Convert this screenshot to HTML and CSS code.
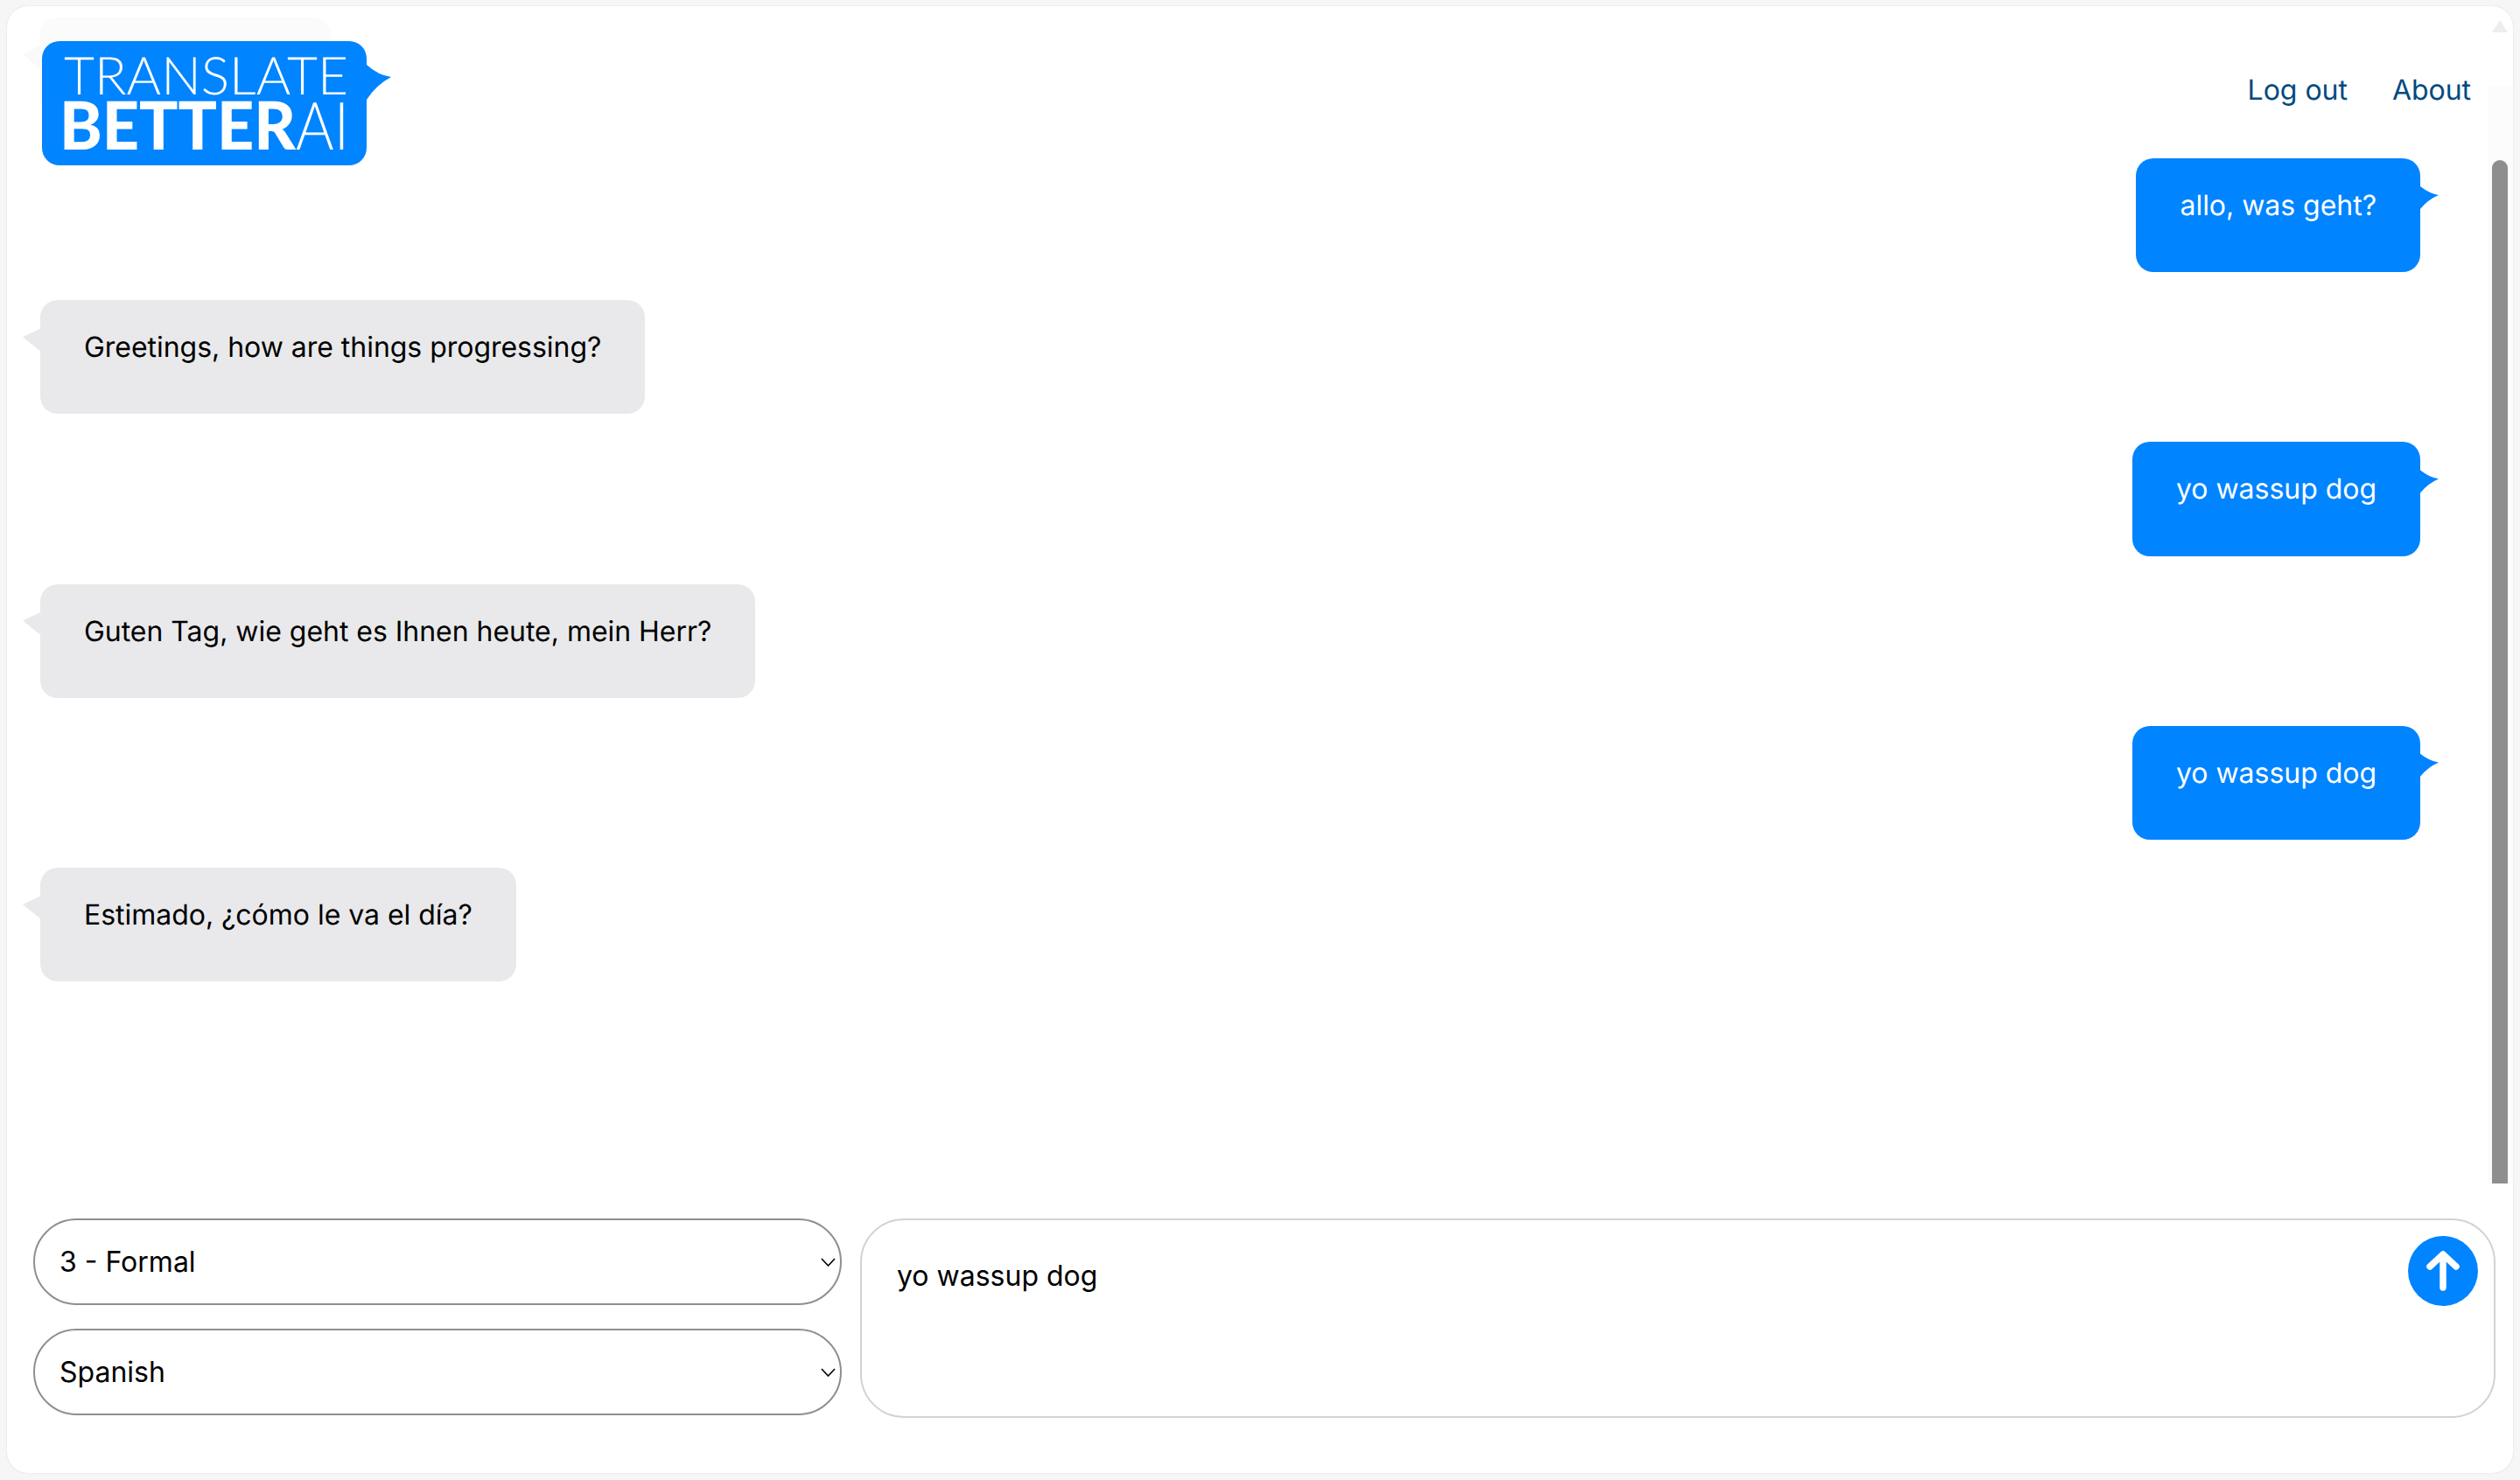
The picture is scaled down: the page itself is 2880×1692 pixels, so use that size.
FILE: index.html
```html
<!DOCTYPE html>
<html lang="en">

<head>
    <meta charset="UTF-8">
    <title>Translate Better AI</title>
    <link rel="stylesheet" href="styles.css">
</head>

<body>
    <div class="card">
        <div class="ghost"></div>
        <div class="scroll-up"></div>
        <div class="scroll-track"></div>
        <div class="scroll-thumb"></div>

        <header class="top">
            <svg class="logo" width="399" height="142" viewBox="0 0 399 142">
                <path d="M20 0H351A20 20 0 0 1 371 20V27Q384 39 399 41Q382 50 371 67V122A20 20 0 0 1 351 142H20A20 20 0 0 1 0 122V20A20 20 0 0 1 20 0Z" fill="#0084ff" />
                <text class="logo-thin" x="25" y="61" textLength="325" lengthAdjust="spacingAndGlyphs">TRANSLATE</text>
                <text class="logo-big" x="20" y="124" textLength="270" lengthAdjust="spacingAndGlyphs">BETTER</text>
                <text class="logo-ai" x="290" y="124" textLength="61" lengthAdjust="spacingAndGlyphs">AI</text>
            </svg>
            <nav class="links">
                <a href="#">Log out</a>
                <a href="#">About</a>
            </nav>
        </header>

        <main class="messages">
            <div class="bubble sent">allo, was geht?</div>
            <div class="bubble received">Greetings, how are things progressing?</div>
            <div class="bubble sent">yo wassup dog</div>
            <div class="bubble received">Guten Tag, wie geht es Ihnen heute, mein Herr?</div>
            <div class="bubble sent">yo wassup dog</div>
            <div class="bubble received">Estimado, ¿cómo le va el día?</div>
        </main>

        <form class="composer">
            <div class="pickers">
                <select>
                    <option>3 - Formal</option>
                </select>
                <select>
                    <option>Spanish</option>
                </select>
            </div>
            <div class="input-wrap">
                <textarea>yo wassup dog</textarea>
                <button type="button" class="send" aria-label="Send">
                    <svg width="80" height="80" viewBox="0 0 80 80">
                        <path d="M40 59V22M25 35L40 21L55 35" fill="none" stroke="#fff" stroke-width="7.5" stroke-linecap="round" stroke-linejoin="round" />
                    </svg>
                </button>
            </div>
        </form>
    </div>
</body>

</html>
```

FILE: styles.css
```css
* {
    box-sizing: border-box;
    margin: 0;
    padding: 0;
}

body {
    background-color: #f6f6f6;
    height: 1692px;
    padding: 7px 8px 8px;
    font-family: Inter, 'Noto Sans', sans-serif;
    font-size: 32px;
    line-height: 48px;
    letter-spacing: -0.03px;
    color: #000;
    text-rendering: geometricPrecision;
    overflow: hidden;
}

.card {
    position: relative;
    display: flex;
    flex-direction: column;
    height: 100%;
    background: #fff;
    border-radius: 24px;
    box-shadow: 0 0 2px rgba(0, 0, 0, 0.14);
    overflow: hidden;
}

/* faded message scrolled away under the logo */
.ghost {
    position: absolute;
    left: 38px;
    top: 13px;
    width: 332px;
    height: 116px;
    background: #fbfbfb;
    border-radius: 20px;
}

.ghost::before {
    content: "";
    position: absolute;
    left: -20px;
    top: 32px;
    width: 20px;
    height: 27px;
    background: #f9f9f9;
    clip-path: polygon(100% 0, 0 38%, 100% 100%);
}

.scroll-track {
    position: absolute;
    right: 0;
    top: 92px;
    bottom: 330px;
    width: 29px;
    background: #fcfcfc;
}

.scroll-thumb {
    position: absolute;
    right: 6px;
    top: 176px;
    width: 18px;
    height: 1170px;
    background: #8e8e8e;
    border-radius: 9px 9px 0 0;
}

.scroll-up {
    position: absolute;
    right: 6px;
    top: 16px;
    width: 18px;
    height: 14px;
    background: #ededed;
    clip-path: polygon(50% 0, 100% 100%, 0 100%);
}

.top {
    position: relative;
    display: flex;
    justify-content: space-between;
    align-items: flex-start;
    height: 174px;
    padding: 40px 48px 0 40px;
    flex-shrink: 0;
}

.logo {
    display: block;
}

.logo text {
    fill: #fff;
    font-family: Lato, sans-serif;
}

.logo-thin {
    font-size: 60px;
    font-weight: 300;
}

.logo-big {
    font-size: 76px;
    font-weight: 900;
}

.logo-ai {
    font-size: 76px;
    font-weight: 300;
}

.links {
    display: flex;
    gap: 51px;
    margin-top: 31.500px;
}

.links a {
    color: #004a7f;
    text-decoration: none;
}

.messages {
    flex: 1;
    display: flex;
    flex-direction: column;
    align-items: flex-start;
    gap: 32px;
    padding: 0 106px 0 38px;
    position: relative;
}

.bubble {
    position: relative;
    height: 130.200px;
    padding: 30px 50px 0;
    border-radius: 20px;
}

.bubble::after {
    content: "";
    position: absolute;
    top: 32px;
    width: 21px;
    height: 27px;
}

.sent {
    align-self: flex-end;
    background: #0084ff;
    color: #fff;
}

.sent::after {
    right: -21px;
    background: #0084ff;
    clip-path: path('M0 0Q10 8 21 10Q9 15 0 26Z');
}

.received {
    background: #e9e9eb;
}

.received::after {
    left: -20px;
    background: #e9e9eb;
    clip-path: polygon(100% 0, 0 37%, 100% 100%);
}

.composer {
    display: flex;
    gap: 21px;
    padding: 0 20px 63px 30px;
    flex-shrink: 0;
}

.pickers {
    display: flex;
    flex-direction: column;
    gap: 27px;
    width: 924px;
    flex-shrink: 0;
}

select {
    appearance: none;
    width: 100%;
    height: 99px;
    padding: 1px 40px 0 28px;
    border: 2px solid #8f8f8f;
    border-radius: 50px;
    background: #fff url("data:image/svg+xml,%3Csvg xmlns='http://www.w3.org/2000/svg' width='17' height='10' viewBox='0 0 17 10'%3E%3Cpath d='M1 1L8.500 9L16 1' fill='none' stroke='%23000' stroke-width='1.600'/%3E%3C/svg%3E") no-repeat right 5px center;
    font: inherit;
    color: #000;
}

.input-wrap {
    position: relative;
    flex: 1;
    height: 228px;
}

textarea {
    display: block;
    width: 100%;
    height: 100%;
    padding: 40px 110px 0 40px;
    border: 2px solid #d2d2d2;
    border-radius: 50px;
    font: inherit;
    color: #000;
    resize: none;
    outline: none;
}

.send {
    position: absolute;
    top: 20px;
    right: 20px;
    width: 80px;
    height: 80px;
    border: none;
    border-radius: 50%;
    background: #0084ff;
    cursor: pointer;
}

.send svg {
    display: block;
}
```
